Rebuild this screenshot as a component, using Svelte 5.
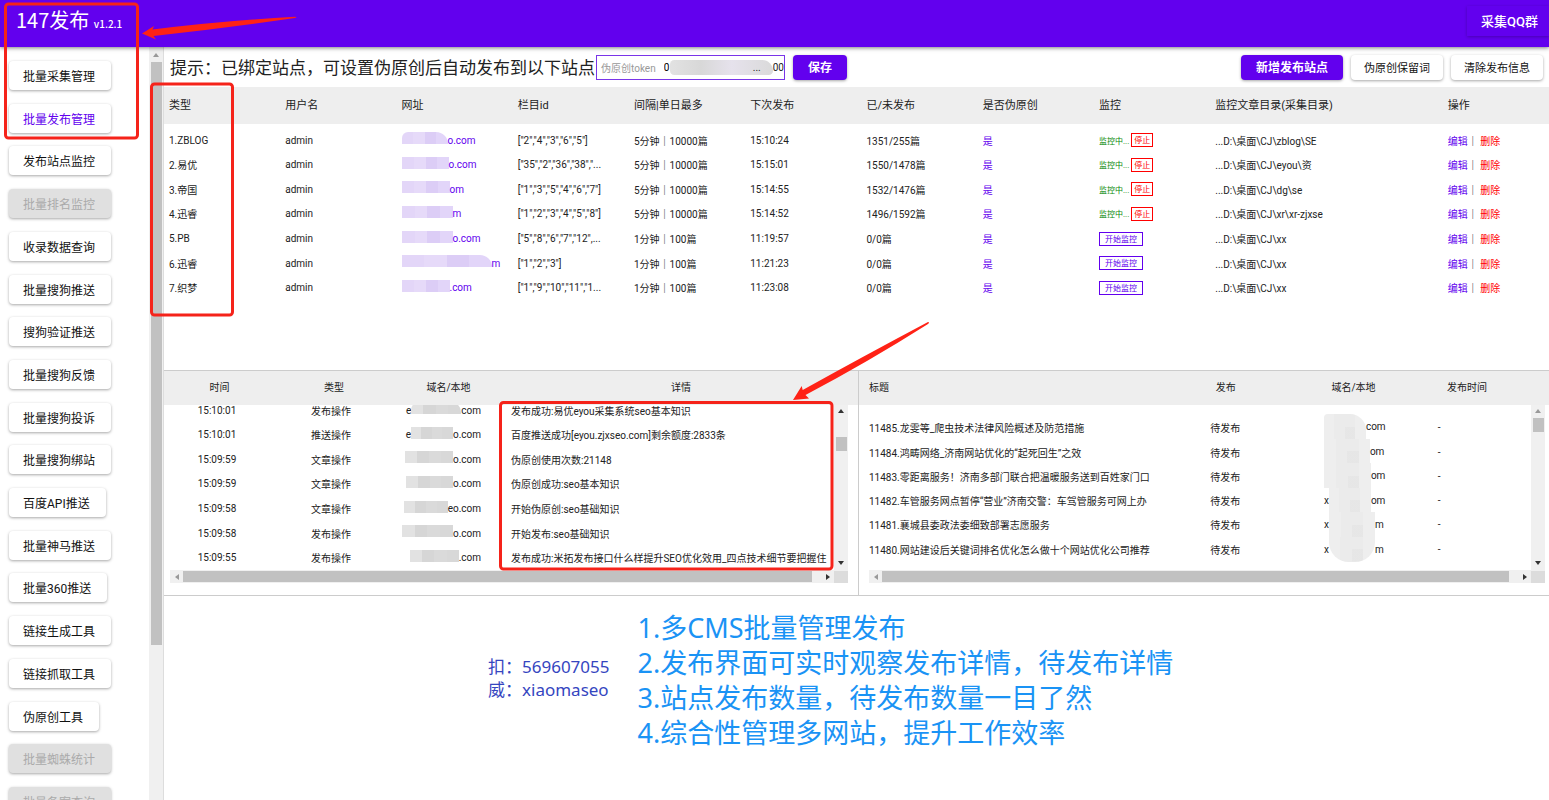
<script lang="ts">
  type MenuItem = { label: string; active?: boolean; disabled?: boolean };

  const menu: MenuItem[] = [
    { label: '批量采集管理' },
    { label: '批量发布管理', active: true },
    { label: '发布站点监控' },
    { label: '批量排名监控', disabled: true },
    { label: '收录数据查询' },
    { label: '批量搜狗推送' },
    { label: '搜狗验证推送' },
    { label: '批量搜狗反馈' },
    { label: '批量搜狗投诉' },
    { label: '批量搜狗绑站' },
    { label: '百度API推送' },
    { label: '批量神马推送' },
    { label: '批量360推送' },
    { label: '链接生成工具' },
    { label: '链接抓取工具' },
    { label: '伪原创工具' },
    { label: '批量蜘蛛统计', disabled: true },
    { label: '批量备案查询', disabled: true },
  ];

  const siteColumns = [
    '类型', '用户名', '网址', '栏目id', '间隔|单日最多', '下次发布',
    '已/未发布', '是否伪原创', '监控', '监控文章目录(采集目录)', '操作',
  ];

  // mask = width of the hidden part of the domain, tail = what stays readable
  const sites = [
    { type: '1.ZBLOG', mask: 46, tail: 'o.com', ids: '["2","4","3","6","5"]', interval: '5分钟｜10000篇', next: '15:10:24', count: '1351/255篇', running: true, dir: '...D:\\桌面\\CJ\\zblog\\SE' },
    { type: '2.易优', mask: 47, tail: 'o.com', ids: '["35","2","36","38","...', interval: '5分钟｜10000篇', next: '15:15:01', count: '1550/1478篇', running: true, dir: '...D:\\桌面\\CJ\\eyou\\资' },
    { type: '3.帝国', mask: 48, tail: 'om', ids: '["1","3","5","4","6","7"]', interval: '5分钟｜10000篇', next: '15:14:55', count: '1532/1476篇', running: true, dir: '...D:\\桌面\\CJ\\dg\\se' },
    { type: '4.迅睿', mask: 51, tail: 'm', ids: '["1","2","3","4","5","8"]', interval: '5分钟｜10000篇', next: '15:14:52', count: '1496/1592篇', running: true, dir: '...D:\\桌面\\CJ\\xr\\xr-zjxse' },
    { type: '5.PB', mask: 51, tail: 'o.com', ids: '["5","8","6","7","12",...', interval: '1分钟｜100篇', next: '11:19:57', count: '0/0篇', running: false, dir: '...D:\\桌面\\CJ\\xx' },
    { type: '6.迅睿', mask: 90, tail: 'm', ids: '["1","2","3"]', interval: '1分钟｜100篇', next: '11:21:23', count: '0/0篇', running: false, dir: '...D:\\桌面\\CJ\\xx' },
    { type: '7.织梦', mask: 48, tail: '.com', ids: '["1","9","10","11","1...', interval: '1分钟｜100篇', next: '11:23:08', count: '0/0篇', running: false, dir: '...D:\\桌面\\CJ\\xx' },
  ];

  const logs = [
    { time: '15:10:01', type: '发布操作', lead: 'e', mask: 50, tail: 'com', detail: '发布成功:易优eyou采集系统seo基本知识' },
    { time: '15:10:01', type: '推送操作', lead: 'e', mask: 42, tail: 'o.com', detail: '百度推送成功[eyou.zjxseo.com]剩余额度:2833条' },
    { time: '15:09:59', type: '文章操作', lead: '', mask: 48, tail: 'o.com', detail: '伪原创使用次数:21148' },
    { time: '15:09:59', type: '文章操作', lead: '', mask: 47, tail: 'o.com', detail: '伪原创成功:seo基本知识' },
    { time: '15:09:58', type: '文章操作', lead: '', mask: 44, tail: 'eo.com', detail: '开始伪原创:seo基础知识' },
    { time: '15:09:58', type: '发布操作', lead: '', mask: 51, tail: 'o.com', detail: '开始发布:seo基础知识' },
    { time: '15:09:55', type: '发布操作', lead: '', mask: 49, tail: '.com', detail: '发布成功:米拓发布接口什么样提升SEO优化效用_四点技术细节要把握住' },
  ];

  const queue = [
    { title: '11485.龙雯等_爬虫技术法律风险概述及防范措施', lead: '', mask: 42, tail: 'com' },
    { title: '11484.鸿畴网络_济南网站优化的“起死回生”之效', lead: '', mask: 46, tail: 'om' },
    { title: '11483.零距离服务！济南多部门联合把温暖服务送到百姓家门口', lead: '', mask: 47, tail: 'om' },
    { title: '11482.车管服务网点暂停“营业”济南交警：车驾管服务可网上办', lead: 'x', mask: 42, tail: 'om' },
    { title: '11481.襄城县委政法委细致部署志愿服务', lead: 'x', mask: 46, tail: 'm' },
    { title: '11480.网站建设后关键词排名优化怎么做十个网站优化公司推荐', lead: 'x', mask: 46, tail: 'm' },
  ];

  const notes = [
    '1.多CMS批量管理发布',
    '2.发布界面可实时观察发布详情，待发布详情',
    '3.站点发布数量，待发布数量一目了然',
    '4.综合性管理多网站，提升工作效率',
  ];

  let token = '0';
</script>

{#snippet verticalBar(start: number, size: number, atTop: boolean)}
  <div class="bar vertical" aria-hidden="true">
    <i class="arrow up" class:dim={atTop}></i>
    <span class="thumb" style={`top: ${start}%; height: ${size}%`}></span>
    <i class="arrow down"></i>
  </div>
{/snippet}

{#snippet horizontalBar()}
  <div class="bar horizontal" aria-hidden="true">
    <i class="arrow left dim"></i>
    <span class="thumb"></span>
    <i class="arrow right"></i>
    <span class="corner"></span>
  </div>
{/snippet}

<div class="page">
  <header class="app-bar">
    <h1>147发布 <small>v1.2.1</small></h1>
    <button type="button" class="group-button">采集QQ群</button>
  </header>

  <div class="body">
    <aside class="sidebar">
      <nav class="menu" aria-label="功能">
        {#each menu as item}
          <button type="button" class="raised" class:active={item.active} disabled={item.disabled}>
            {item.label}
          </button>
        {/each}
      </nav>
      <div class="bar side" aria-hidden="true">
        <i class="arrow up dim"></i>
        <span class="thumb"></span>
      </div>
    </aside>

    <main>
      <div class="toolbar">
        <p>提示：已绑定站点，可设置伪原创后自动发布到以下站点</p>
        <div class="token">
          <label for="token">伪原创token</label>
          <input id="token" type="text" bind:value={token} />
          <span class="token-mask">...</span>
          <span>00</span>
        </div>
        <button type="button" class="filled">保存</button>
        <div class="toolbar-end">
          <button type="button" class="filled">新增发布站点</button>
          <button type="button" class="raised small">伪原创保留词</button>
          <button type="button" class="raised small">清除发布信息</button>
        </div>
      </div>

      <section class="sites">
        <table>
          <thead>
            <tr>
              {#each siteColumns as column}
                <th scope="col">{column}</th>
              {/each}
            </tr>
          </thead>
          <tbody>
            {#each sites as site}
              <tr>
                <td>{site.type}</td>
                <td>admin</td>
                <td>
                  <a href="#site" class="domain">
                    <span class="mask" style={`width: ${site.mask}px`}></span>{site.tail}
                  </a>
                </td>
                <td>{site.ids}</td>
                <td>{site.interval}</td>
                <td>{site.next}</td>
                <td>{site.count}</td>
                <td class="purple">是</td>
                <td class="monitor">
                  {#if site.running}
                    <span>监控中...</span>
                    <button type="button" class="stop">停止</button>
                  {:else}
                    <button type="button" class="start">开始监控</button>
                  {/if}
                </td>
                <td>{site.dir}</td>
                <td><a href="#edit">编辑</a>｜ <a href="#delete" class="delete">删除</a></td>
              </tr>
            {/each}
          </tbody>
        </table>
      </section>

      <div class="panes">
        <section class="pane logs">
          <table>
            <thead>
              <tr>
                <th scope="col">时间</th>
                <th scope="col">类型</th>
                <th scope="col">域名/本地</th>
                <th scope="col">详情</th>
              </tr>
            </thead>
            <tbody>
              {#each logs as log}
                <tr>
                  <td>{log.time}</td>
                  <td>{log.type}</td>
                  <td>
                    <span class="domain">
                      {log.lead}<span class="mask" style={`width: ${log.mask}px`}></span>{log.tail}
                    </span>
                  </td>
                  <td>{log.detail}</td>
                </tr>
              {/each}
            </tbody>
          </table>
          {@render verticalBar(19, 9, false)}
          {@render horizontalBar()}
        </section>

        <section class="pane queue">
          <table>
            <thead>
              <tr>
                <th scope="col">标题</th>
                <th scope="col">发布</th>
                <th scope="col">域名/本地</th>
                <th scope="col">发布时间</th>
              </tr>
            </thead>
            <tbody>
              {#each queue as item}
                <tr>
                  <td>{item.title}</td>
                  <td>待发布</td>
                  <td>
                    <span class="domain">
                      {item.lead}<span class="mask" style={`width: ${item.mask}px`}></span>{item.tail}
                    </span>
                  </td>
                  <td>-</td>
                </tr>
              {/each}
            </tbody>
          </table>
          {@render verticalBar(8, 8, true)}
          {@render horizontalBar()}
        </section>
      </div>

      <section class="notes">
        <address>扣：569607055<br />威：xiaomaseo</address>
        <div class="features">
          {#each notes as note}
            <p>{note}</p>
          {/each}
        </div>
      </section>
    </main>
  </div>

  <!-- hand-drawn callouts over the screen -->
  <svg class="callouts" width="940" height="580" viewBox="0 0 940 580" aria-hidden="true">
    <g fill="none" stroke="#f5231a" stroke-width="3">
      <rect x="5.5" y="4" width="132" height="134" rx="3" />
      <rect x="151.5" y="84" width="81" height="231" rx="3" />
      <rect x="500.5" y="402.5" width="331.5" height="166.5" rx="3" />
    </g>
    <g fill="#ff2216">
      <path d="M142 33.5 L154 26 L152.5 29.5 Q220 21 295 16.7 Q298 17 295 18 Q225 28 153.5 36 L156 39.5 Z" />
      <path d="M793 400 L801.7 386 L802.7 390 Q862 357 928 322 Q930 322 928 324 Q868 362 805.5 395 L809 398.5 Z" />
    </g>
  </svg>
</div>

<style>
  :global(body) {
    margin: 0;
    background: #fff;
  }

  .page {
    position: relative;
    display: flex;
    flex-direction: column;
    height: 100vh;
    overflow: hidden;
    color: #222;
    font-family: Roboto, "Noto Sans CJK SC", sans-serif;
    font-size: 10px;
  }

  h1,
  p {
    margin: 0;
    font-weight: 400;
  }

  button,
  input {
    font-family: inherit;
  }

  button {
    padding: 0;
    border: 0;
    white-space: nowrap;
  }

  .app-bar {
    position: relative;
    z-index: 1;
    display: flex;
    flex: none;
    align-items: center;
    justify-content: space-between;
    height: 47px;
    background: #6200ee;
    color: #fff;
    box-shadow: 0 1px 4px rgba(0, 0, 0, 0.5);
  }

  h1 {
    padding: 0 0 4px 16px;
    font-family: "Noto Sans CJK SC", sans-serif;
    font-size: 20px;
    line-height: 28px;
  }

  h1 small {
    font-size: 10px;
    font-weight: 500;
  }

  .group-button {
    height: 30px;
    margin-bottom: 6px;
    padding: 0 11px 0 14px;
    background: #6200ee;
    color: #fff;
    font-size: 13px;
    font-weight: 500;
    box-shadow: 0 1px 3px rgba(0, 0, 0, 0.25);
  }

  .body {
    display: flex;
    flex: 1;
    min-height: 0;
  }

  .sidebar {
    display: flex;
    flex: none;
    justify-content: space-between;
    width: 163px;
    border-right: 1px solid #ddd;
  }

  .menu {
    display: flex;
    flex-direction: column;
    align-items: flex-start;
    justify-content: space-between;
    height: 755px;
    padding: 14px 0 0 9px;
  }

  .raised,
  .filled {
    border-radius: 4px;
    box-shadow: 0 1px 3px rgba(0, 0, 0, 0.35);
  }

  .raised {
    height: 29px;
    padding: 0 16px 0 14px;
    background: #fff;
    color: #111;
    font-size: 12px;
  }

  .raised.active {
    color: #6200ee;
  }

  .raised:disabled {
    background: #e0e0e0;
    color: #aaa;
  }

  .raised.small {
    height: 25px;
    padding: 0 13px;
    font-size: 11px;
  }

  .filled {
    height: 25px;
    padding: 0 15px 1px;
    background: #6200ee;
    color: #fff;
    font-size: 12px;
    font-weight: 700;
  }

  main {
    display: flex;
    flex: 1;
    flex-direction: column;
    min-width: 0;
    overflow: hidden;
  }

  .toolbar {
    display: flex;
    flex: none;
    align-items: center;
    gap: 8px;
    height: 40px;
    padding: 0 6px;
  }

  .toolbar p {
    margin-right: -7px;
    padding-bottom: 2px;
    font-size: 17px;
    white-space: nowrap;
  }

  .token {
    display: flex;
    box-sizing: border-box;
    align-items: center;
    width: 189px;
    height: 25px;
    padding-left: 4px;
    border: 1px solid #7a35e8;
    overflow: hidden;
  }

  .token label {
    margin-right: 8px;
    color: #999;
    white-space: nowrap;
  }

  .token input {
    width: 6px;
    padding: 0;
    border: 0;
    outline: 0;
    font-size: 10px;
  }

  .token-mask {
    flex: 1;
    height: 15px;
    padding-right: 12px;
    border-radius: 8px 20px 8px 8px;
    background: linear-gradient(90deg, #e2e2e2, #d8d8d8 30%, #e6e2ec 60%, #dadada);
    line-height: 16px;
    text-align: right;
  }

  .toolbar-end {
    display: flex;
    gap: 8px;
    margin-left: auto;
  }

  table,
  thead,
  tbody {
    display: block;
  }

  tr {
    display: grid;
    align-items: center;
  }

  th,
  td {
    padding: 0;
    font-weight: 400;
    text-align: left;
    white-space: nowrap;
  }

  th {
    padding-bottom: 3px;
  }

  thead {
    background: #eee;
  }

  tbody {
    display: grid;
  }

  a,
  .purple {
    color: #6200ee;
    text-decoration: none;
  }

  .delete {
    color: #f00;
  }

  .sites {
    flex: none;
    height: 283px;
  }

  /* the grid is a little wider than the pane, its last column runs out on the right */
  .sites table {
    width: calc(100% + 10px);
  }

  .sites tr {
    grid-template-columns: repeat(9, minmax(0, 1fr)) minmax(0, 2fr) minmax(0, 1fr);
  }

  .sites thead tr {
    height: 37px;
  }

  .sites th {
    padding-left: 5px;
    font-size: 11px;
  }

  .sites tbody {
    grid-template-rows: repeat(7, 1fr);
    height: 172px;
    margin-top: 4px;
  }

  .sites td {
    padding-left: 5px;
  }

  .domain {
    display: inline-flex;
    align-items: center;
  }

  .mask {
    height: 12px;
    background: linear-gradient(90deg, #e2e2e2 25%, #d6d6d6 25% 50%, #dadada 50% 75%, #d8d8d8 75%);
  }

  .sites .mask {
    margin-bottom: 4px;
    background: linear-gradient(90deg, #e3d6f8 25%, #e6daf9 25% 50%, #dccdf6 50% 75%, #e2d5f9 75%);
  }

  .sites tr:first-child .mask {
    border-radius: 6px 12px 0 0;
  }

  .sites tr:nth-child(6) .mask {
    border-radius: 0 30px 0 0;
  }

  .monitor {
    display: flex;
    align-items: center;
    gap: 2px;
    color: #0a8a0a;
    font-size: 8px;
  }

  .monitor button {
    height: 14px;
    border: 1px solid;
    background: #fff;
    font-size: 8px;
    line-height: 14px;
  }

  .monitor .stop {
    padding: 0 2px;
    color: #f00;
  }

  .monitor .start {
    padding: 0 5px;
    color: #6200ee;
  }

  .panes {
    display: grid;
    flex: none;
    grid-template-columns: 139fr 138fr;
    border: solid #ccc;
    border-width: 1px 0;
  }

  .pane {
    position: relative;
    box-sizing: border-box;
    height: 224px;
    min-width: 0;
  }

  .pane thead tr {
    height: 34px;
  }

  .pane tbody {
    height: 165px;
    overflow: hidden;
    align-content: start;
  }

  .logs {
    border-right: 1px solid #ccc;
  }

  .logs th {
    text-align: center;
  }

  .logs thead tr {
    grid-template-columns: 16fr 17fr 16fr 51fr;
  }

  .logs tbody {
    margin: 0 24px 0 6px;
    grid-template-rows: repeat(7, calc(172px / 7));
  }

  .logs tbody tr {
    position: relative;
    top: -7px;
    grid-template-columns: 104fr 114fr 113fr 333fr;
  }

  .logs td:nth-child(1) {
    padding-right: 10px;
    text-align: center;
  }

  .logs td:nth-child(2) {
    text-align: center;
  }

  .logs td:nth-child(3) {
    padding-right: 20px;
    text-align: right;
  }

  .logs td:nth-child(4) {
    padding-left: 10px;
  }

  .logs .mask {
    margin-bottom: 4px;
  }

  .logs tr:first-child .mask {
    border-radius: 8px 10px 0 0;
  }

  .queue tr {
    grid-template-columns: 51fr 17fr 17fr 15fr;
  }

  .queue thead {
    padding-left: 10px;
  }

  .queue tbody {
    box-sizing: border-box;
    margin: 0 11px 0 10px;
    padding-top: 9px;
    grid-template-rows: repeat(6, calc(172px / 7));
  }

  .queue .mask {
    height: 25px;
    background:
      linear-gradient(90deg, transparent 50%, rgba(0, 0, 0, 0.02) 50% 75%, transparent 75%) 0 100% / 100% 50% no-repeat,
      linear-gradient(90deg, #eee 25%, #ebebeb 25% 75%, #eee 75%);
  }

  .queue tr:first-child .mask {
    border-radius: 4px 16px 0 0;
  }

  .queue tr:last-child .mask {
    border-radius: 0 0 20px 20px;
  }

  .bar {
    background: #f0f0f0;
  }

  .thumb {
    background: #c1c1c1;
  }

  .side {
    display: flex;
    flex-direction: column;
    align-items: center;
    width: 14px;
  }

  .side .arrow {
    margin: 6px 0 5px;
  }

  .side .thumb {
    width: 11px;
    height: 583px;
  }

  .vertical {
    position: absolute;
    top: 34px;
    right: 10px;
    display: flex;
    flex-direction: column;
    align-items: center;
    justify-content: space-between;
    box-sizing: border-box;
    width: 14px;
    height: 166px;
    padding: 4px 0 6px;
  }

  .vertical .thumb {
    position: absolute;
    width: 11px;
  }

  .horizontal {
    display: flex;
    align-items: center;
    height: 13px;
    margin: 0 10px 0 6px;
  }

  .horizontal .thumb {
    flex: 1;
    height: 11px;
    margin: 0 14px 0 4px;
  }

  .horizontal .left {
    margin-left: 5px;
  }

  .corner {
    width: 14px;
    height: 13px;
    margin-left: 4px;
    background: #dcdcdc;
  }

  .queue .vertical {
    right: 4px;
  }

  .queue .horizontal {
    margin: 0 4px 0 10px;
  }

  .arrow {
    flex: none;
    border: solid transparent;
    color: #333;
  }

  .dim {
    color: #999;
  }

  .up {
    border-width: 0 3px 4px;
    border-bottom-color: currentColor;
  }

  .down {
    border-width: 4px 3px 0;
    border-top-color: currentColor;
  }

  .left {
    border-width: 3px 4px 3px 0;
    border-right-color: currentColor;
  }

  .right {
    border-width: 3px 0 3px 4px;
    border-left-color: currentColor;
  }

  .notes {
    display: flex;
    gap: 28px;
    padding: 14px 0 0 324px;
    font-family: "Noto Sans", "Noto Sans CJK SC", sans-serif;
  }

  address {
    margin-top: 45px;
    color: #3546bf;
    font-size: 17px;
    font-style: normal;
    line-height: 23px;
    white-space: nowrap;
  }

  .features {
    color: #1a93f5;
    font-size: 27px;
    font-weight: 300;
    line-height: 35px;
    white-space: nowrap;
  }

  .callouts {
    position: absolute;
    z-index: 2;
    top: 0;
    left: 0;
    pointer-events: none;
  }
</style>
